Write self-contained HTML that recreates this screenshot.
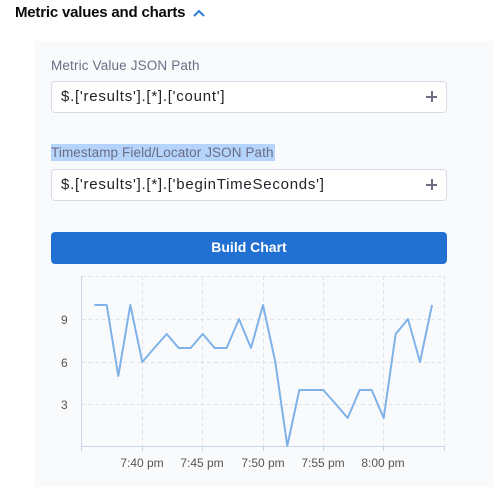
<!DOCTYPE html>
<html><head><meta charset="utf-8"><style>
*{margin:0;padding:0;box-sizing:border-box}
body{width:496px;height:491px;background:#fff;font-family:"Liberation Sans",sans-serif;position:relative;overflow:hidden}
.h{position:absolute;left:15px;top:4px;font-size:15px;font-weight:bold;color:#0b0b0d;letter-spacing:-0.2px}
.panel{position:absolute;left:35px;top:41px;width:458px;height:446px;background:#f9fafc}
.lbl{position:absolute;left:51px;font-size:13.5px;color:#6b6d85;letter-spacing:0.15px;white-space:nowrap}
.inp{position:absolute;left:51px;width:396px;height:32px;background:#fff;border:1px solid #d9dae5;border-radius:4px;font-size:15px;letter-spacing:0.75px;color:#22222a;padding:6px 0 0 9px;white-space:nowrap}
.plus{position:absolute;right:9px;top:9px;width:11px;height:11px}
.plus:before,.plus:after{content:"";position:absolute;background:#6b6d85}
.plus:before{left:5px;top:0;width:1.5px;height:11px}
.plus:after{top:5px;left:0;height:1.5px;width:11px}
.btn{position:absolute;left:51px;top:232px;width:396px;height:32px;background:#2271d2;border-radius:4px;color:#fff;font-size:14px;text-align:center;line-height:31px;font-weight:bold}
</style></head><body>
<div class="h">Metric values and charts</div>
<svg style="position:absolute;left:192px;top:8px" width="14" height="10"><path d="M2 8 L7 3 L12 8" fill="none" stroke="#2a7bd8" stroke-width="2"/></svg>
<div class="panel"></div>
<div class="lbl" style="top:58px">Metric Value JSON Path</div>
<div class="inp" style="top:81px">$.['results'].[*].['count']<span class="plus"></span></div>
<div class="lbl" style="top:144px;background:#b4d4fb;height:17px;padding-top:1px;width:224px;letter-spacing:0.1px">Timestamp Field/Locator JSON Path</div>
<div class="inp" style="top:169px">$.['results'].[*].['beginTimeSeconds']<span class="plus"></span></div>
<div class="btn">Build Chart</div>
<svg style="position:absolute;left:0;top:0" width="496" height="491" font-family="Liberation Sans,sans-serif">
<g stroke="#e0e3ea" stroke-dasharray="4,3" stroke-width="1">
<line x1="81" y1="276.5" x2="444" y2="276.5"/>
<line x1="81" y1="319.5" x2="444" y2="319.5"/>
<line x1="81" y1="362.5" x2="444" y2="362.5"/>
<line x1="81" y1="404.5" x2="444" y2="404.5"/>
<line x1="142.5" y1="276" x2="142.5" y2="446"/>
<line x1="202.5" y1="276" x2="202.5" y2="446"/>
<line x1="263.5" y1="276" x2="263.5" y2="446"/>
<line x1="323.5" y1="276" x2="323.5" y2="446"/>
<line x1="383.5" y1="276" x2="383.5" y2="446"/>
<line x1="444.5" y1="276" x2="444.5" y2="446"/>
</g>
<g stroke="#c9d6ea" stroke-width="1">
<line x1="81.5" y1="276" x2="81.5" y2="446"/>
<line x1="81" y1="446.5" x2="444" y2="446.5"/>
<line x1="81.5" y1="446" x2="81.5" y2="451"/>
<line x1="142.5" y1="446" x2="142.5" y2="451"/>
<line x1="202.5" y1="446" x2="202.5" y2="451"/>
<line x1="263.5" y1="446" x2="263.5" y2="451"/>
<line x1="323.5" y1="446" x2="323.5" y2="451"/>
<line x1="383.5" y1="446" x2="383.5" y2="451"/>
<line x1="444.5" y1="446" x2="444.5" y2="451"/>
</g>
<polyline fill="none" stroke="#7fb2e8" stroke-width="2" stroke-linejoin="round" points="94.3,305 106.7,305 118.3,376 130.3,305 142.3,362 154.3,348 166.7,334 178.7,348 190.7,348 202.7,334 214.7,348 226.7,348 239,319 251,348 263,305 275.3,362 287.3,446 299.3,390 311.3,390 323.3,390 335.7,404 347.7,418 359.7,390 371.7,390 383.7,418 395.7,334 408,319 420,362 432,305"/>
<g font-size="12" fill="#555">
<text x="61" y="324">9</text><text x="61" y="367">6</text><text x="61" y="409">3</text>
<text x="142" y="467" text-anchor="middle">7:40 pm</text>
<text x="202" y="467" text-anchor="middle">7:45 pm</text>
<text x="263" y="467" text-anchor="middle">7:50 pm</text>
<text x="323" y="467" text-anchor="middle">7:55 pm</text>
<text x="383" y="467" text-anchor="middle">8:00 pm</text>
</g>
</svg>
</body></html>
